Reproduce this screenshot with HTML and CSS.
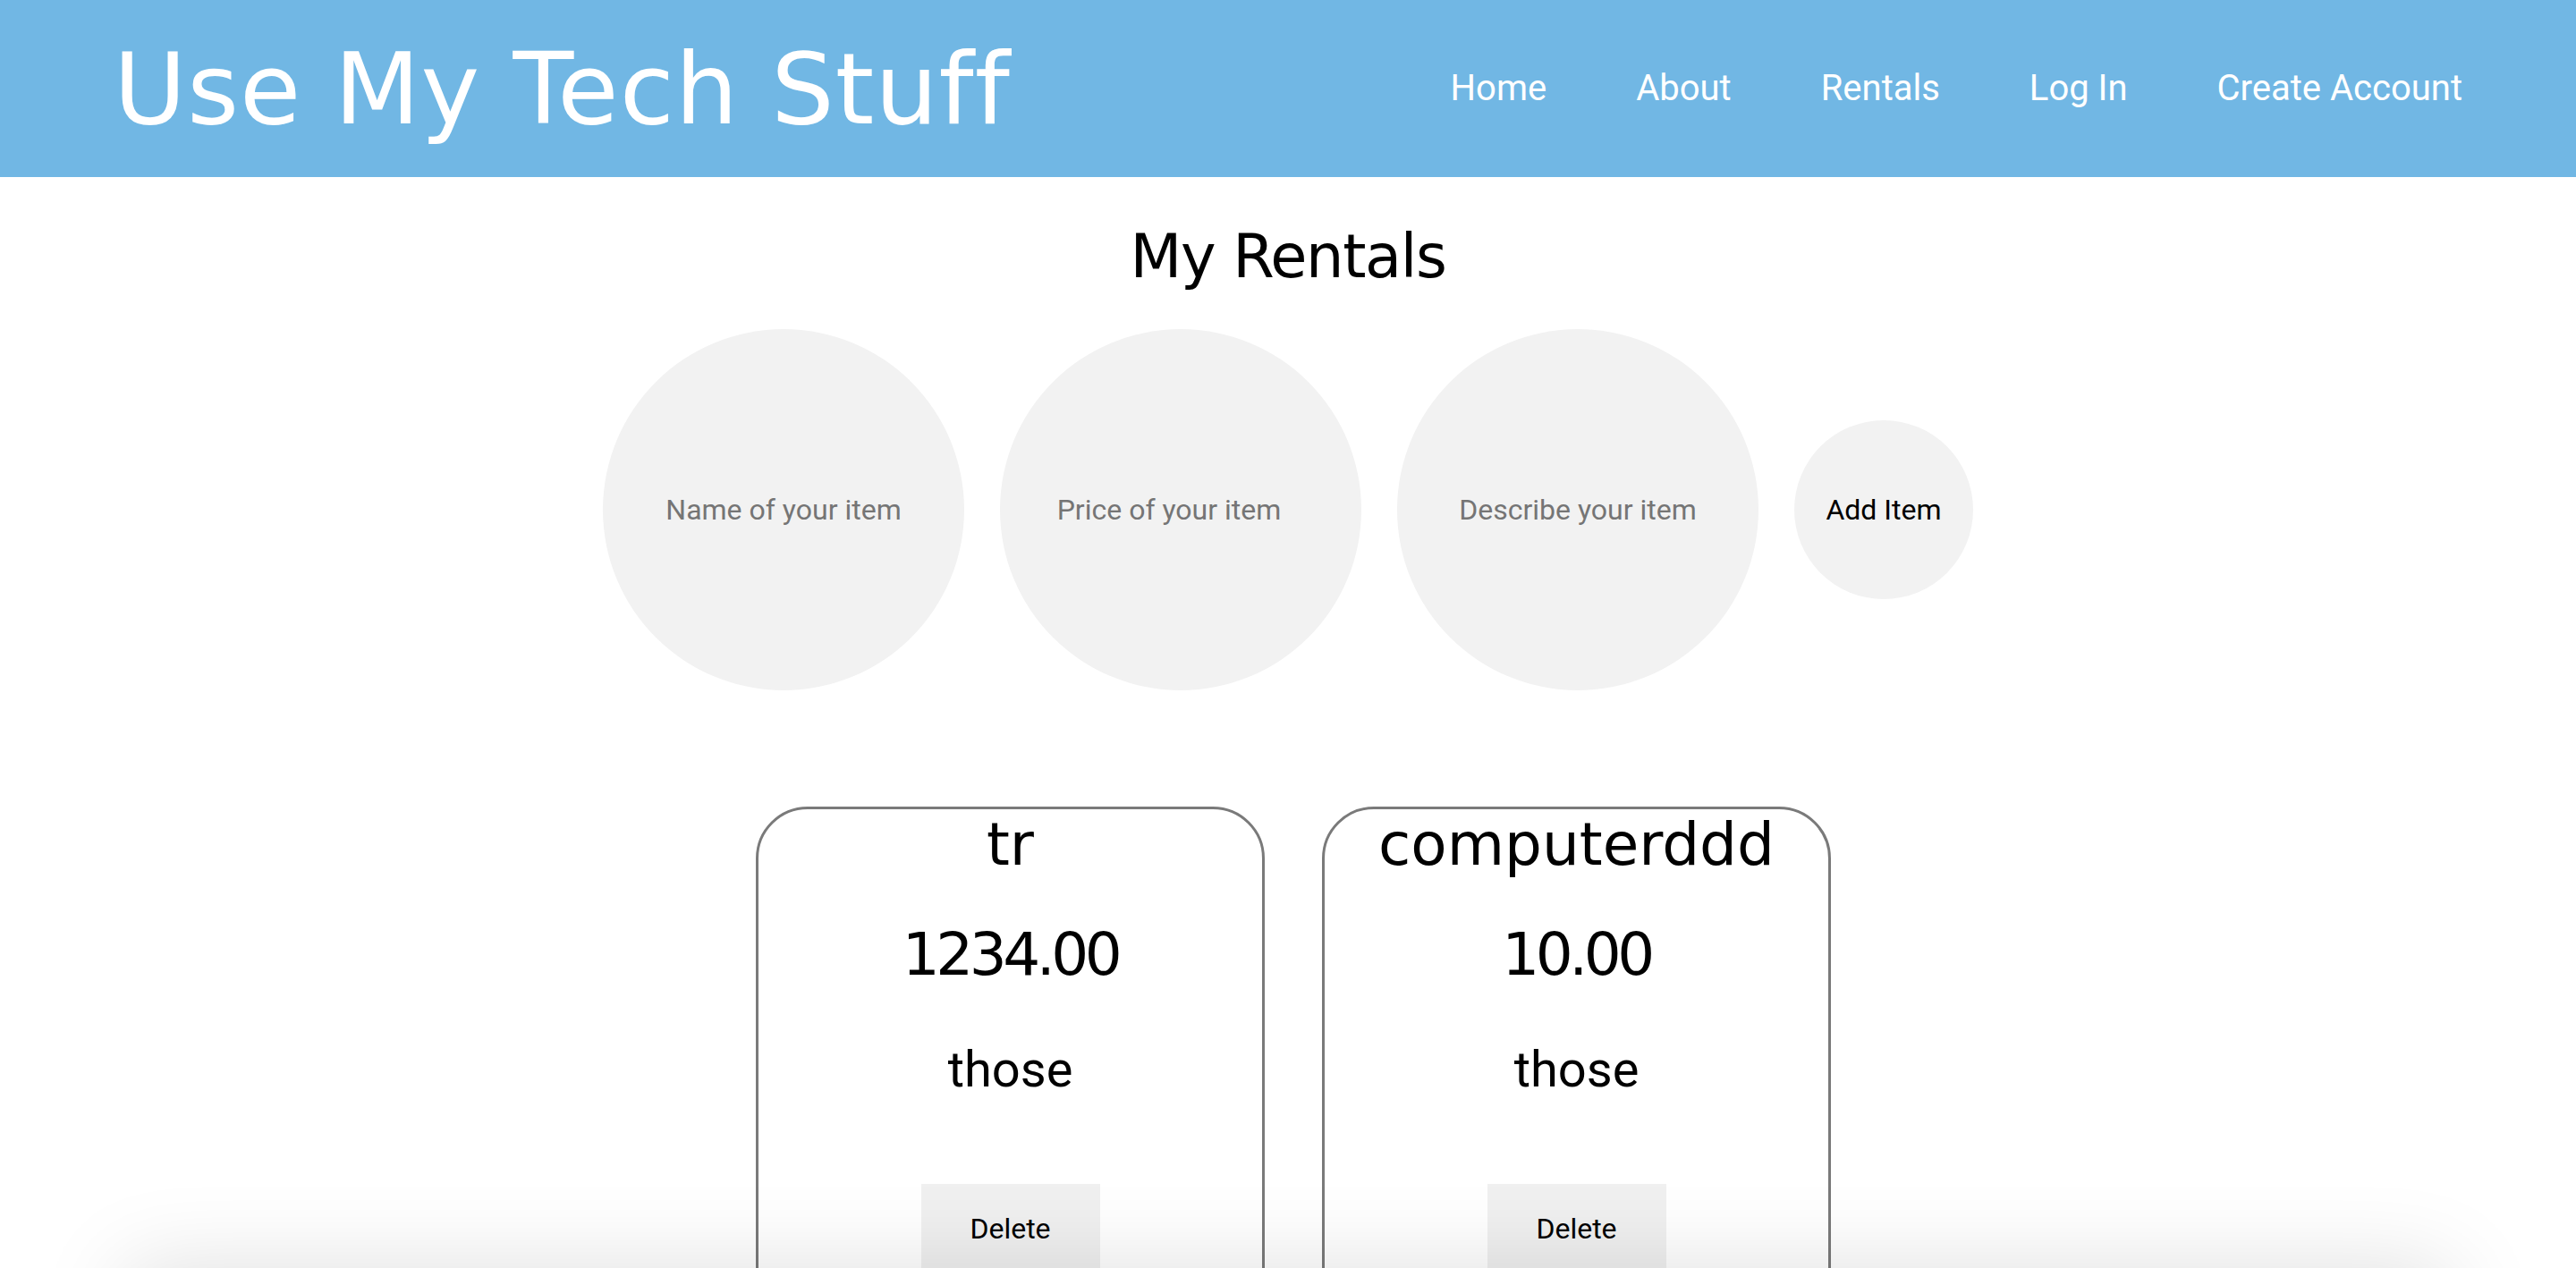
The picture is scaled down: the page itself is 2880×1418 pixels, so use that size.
FILE: index.html
```html
<!DOCTYPE html>
<html lang="en">
<head>
<meta charset="utf-8">
<title>Use My Tech Stuff</title>
<link rel="stylesheet" href="styles.css">
</head>
<body>
<header class="site-header">
  <h1 class="brand">Use My Tech Stuff</h1>
  <nav class="nav">
    <a class="nav-link" href="#">Home</a>
    <a class="nav-link" href="#">About</a>
    <a class="nav-link" href="#">Rentals</a>
    <a class="nav-link" href="#">Log In</a>
    <a class="nav-link" href="#">Create Account</a>
  </nav>
</header>
<main class="page">
  <h2 class="page-title">My Rentals</h2>
  <form class="add-form">
    <input class="bubble" type="text" placeholder="Name of your item">
    <input class="bubble bubble-price" type="text" placeholder="Price of your item">
    <input class="bubble" type="text" placeholder="Describe your item">
    <button class="add-btn" type="button">Add Item</button>
  </form>
  <section class="cards">
    <article class="card">
      <h3 class="card-name">tr</h3>
      <p class="card-price">1234.00</p>
      <p class="card-desc">those</p>
      <button class="delete-btn" type="button">Delete</button>
    </article>
    <article class="card">
      <h3 class="card-name">computerddd</h3>
      <p class="card-price">10.00</p>
      <p class="card-desc">those</p>
      <button class="delete-btn" type="button">Delete</button>
    </article>
  </section>
</main>
<div class="footer-shade"></div>
</body>
</html>
```
FILE: styles.css
```css
* { box-sizing: border-box; }

html, body {
  margin: 0;
  padding: 0;
  background: #ffffff;
}

body {
  font-family: Roboto, "Liberation Sans", sans-serif;
  color: #000;
  overflow: hidden;
}

.site-header {
  height: 198px;
  background: #71b7e4;
  display: flex;
  align-items: center;
  justify-content: space-between;
  padding: 0 127px 0 127px;
}

.brand {
  margin: 0;
  font-family: "DejaVu Sans", sans-serif;
  font-weight: normal;
  font-size: 111px;
  line-height: 1;
  letter-spacing: 1px;
  color: #ffffff;
}

.nav {
  display: flex;
  gap: 100px;
}

.nav-link {
  font-family: Roboto, sans-serif;
  font-size: 40px;
  color: #ffffff;
  text-decoration: none;
  line-height: 1;
}

.page {
  display: flex;
  flex-direction: column;
  align-items: center;
}

.page-title {
  margin: 56px 0 0 0;
  font-family: "DejaVu Sans", sans-serif;
  font-weight: normal;
  font-size: 67px;
  line-height: 67px;
  letter-spacing: -1.4px;
}

.add-form {
  margin-top: 47px;
  display: flex;
  align-items: center;
  gap: 40px;
}

.bubble {
  width: 404px;
  height: 404px;
  border: none;
  border-radius: 50%;
  background: #f2f2f2;
  font-family: Roboto, sans-serif;
  font-size: 32px;
  text-align: center;
  color: #000;
  padding: 0;
  outline: none;
}

.bubble::placeholder {
  color: #757575;
}

.bubble-price {
  padding-right: 26px;
}

.add-btn {
  width: 200px;
  height: 200px;
  border: none;
  border-radius: 50%;
  background: #f2f2f2;
  font-family: Roboto, sans-serif;
  font-size: 32px;
  color: #000;
  padding: 0;
}

.cards {
  margin-top: 130px;
  display: flex;
  justify-content: center;
  gap: 64px;
  padding-left: 12px;
}

.card {
  width: 569px;
  height: 640px;
  border: 3px solid #7a7a7a;
  border-radius: 58px;
  display: flex;
  flex-direction: column;
  align-items: center;
  padding-top: 7px;
}

.card-name,
.card-price {
  margin: 0;
  font-family: "DejaVu Sans", sans-serif;
  font-weight: normal;
  font-size: 66px;
  line-height: 66px;
}

.card-price {
  margin-top: 57px;
  letter-spacing: -4.5px;
}

.card-desc {
  margin: 67px 0 0 0;
  font-family: Roboto, sans-serif;
  font-size: 56px;
  line-height: 56px;
}

.delete-btn {
  margin-top: 100px;
  width: 200px;
  height: 100px;
  border: none;
  background: #f0f0f0;
  font-family: Roboto, sans-serif;
  font-size: 32px;
  color: #000;
}

.footer-shade {
  position: fixed;
  left: 140px;
  right: 140px;
  bottom: -200px;
  height: 200px;
  background: #ffffff;
  box-shadow: 0 0 100px rgba(0, 0, 0, 0.13);
}
```
